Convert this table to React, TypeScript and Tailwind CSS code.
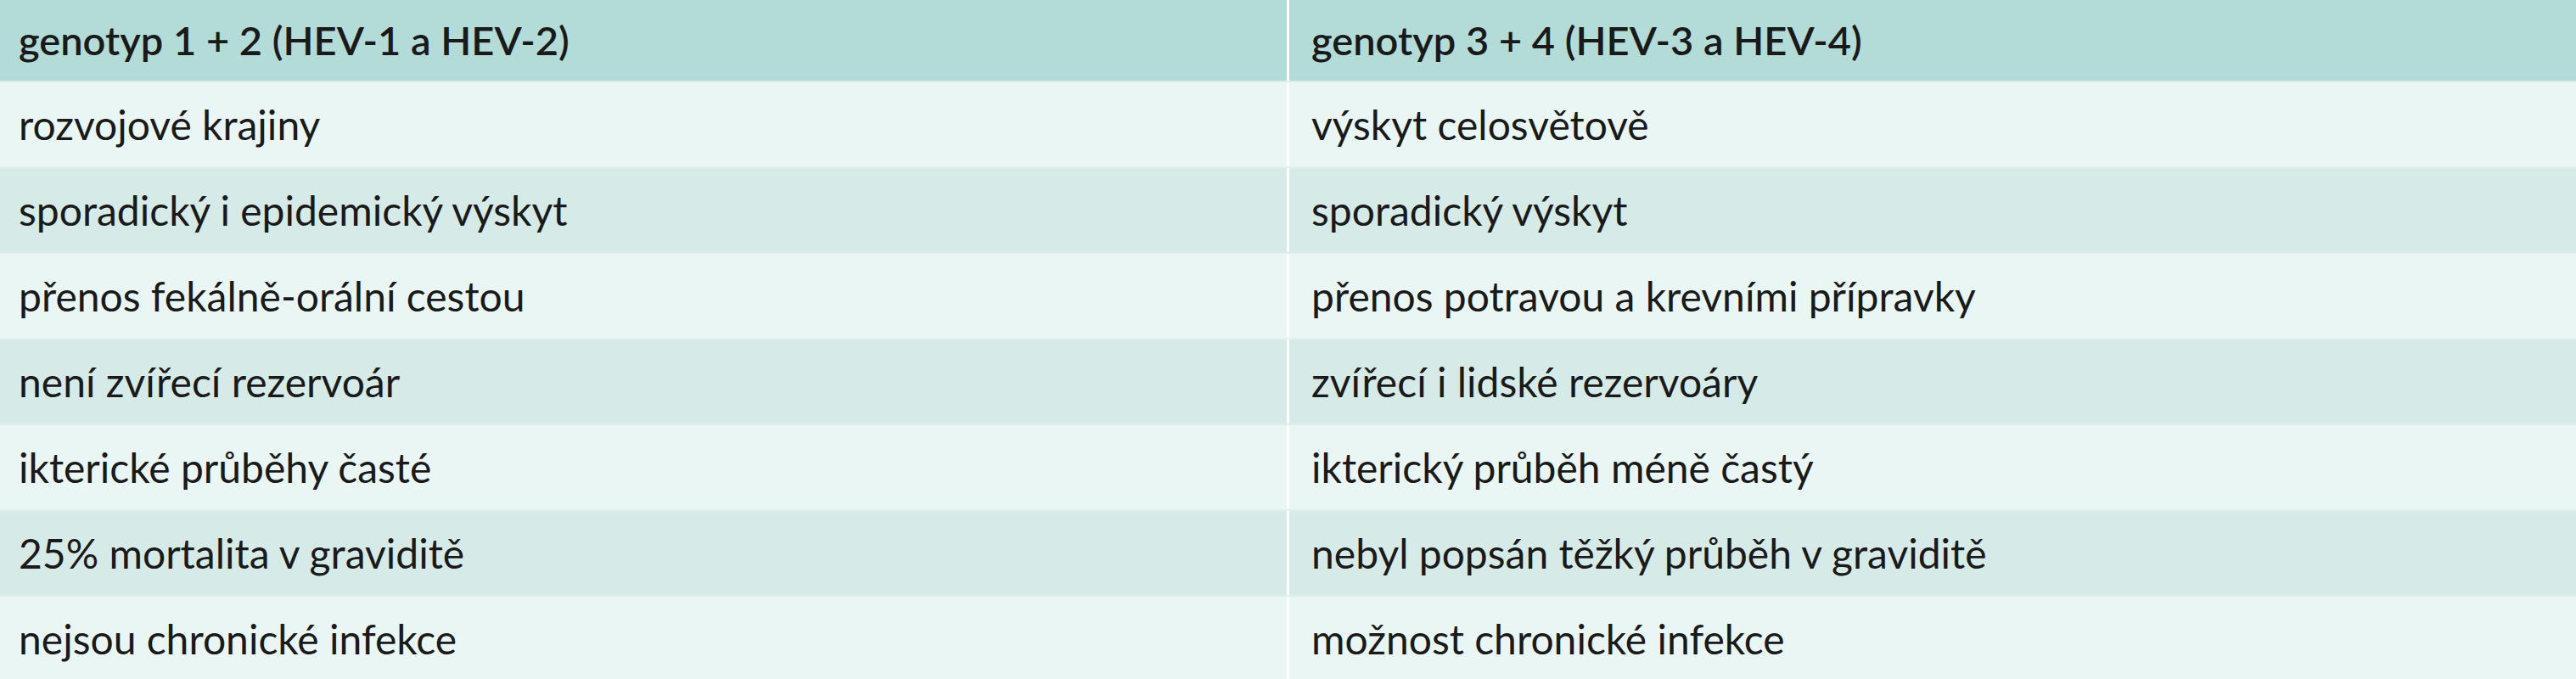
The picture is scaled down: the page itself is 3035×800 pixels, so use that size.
const rows: [string, string][] = [
  ["rozvojové krajiny", "výskyt celosvětově"],
  ["sporadický i epidemický výskyt", "sporadický výskyt"],
  ["přenos fekálně-orální cestou", "přenos potravou a krevními přípravky"],
  ["není zvířecí rezervoár", "zvířecí i lidské rezervoáry"],
  ["ikterické průběhy časté", "ikterický průběh méně častý"],
  ["25% mortalita v graviditě", "nebyl popsán těžký průběh v graviditě"],
  ["nejsou chronické infekce", "možnost chronické infekce"],
];

export default function App() {
  return (
    <div className="h-[800px] w-[3035px] overflow-hidden bg-[#eaf6f3] font-['Lato',sans-serif] text-[48px] leading-none text-[#1a1a1a]">
      <div className="grid h-[95px] grid-cols-[1519px_1fr] bg-[#b3dcd8] text-[47px] font-semibold">
        <div className="flex items-center border-r-[3px] border-white pl-[22px]">genotyp 1 + 2 (HEV-1 a HEV-2)</div>
        <div className="flex items-center pl-[26px]">genotyp 3 + 4 (HEV-3 a HEV-4)</div>
      </div>
      {rows.map(([left, right], i) => (
        <div
          key={left}
          className={
            i % 2 === 0
              ? "grid h-[101px] grid-cols-[1519px_1fr] border-t-2 border-[#dcefec] bg-[#eaf6f3]"
              : "grid h-[101px] grid-cols-[1519px_1fr] border-t-2 border-[#e0f1ee] bg-[#d6eae7]"
          }
        >
          <div className="flex items-center border-r-[3px] border-white pl-[22px]">{left}</div>
          <div className="flex items-center pl-[26px]">{right}</div>
        </div>
      ))}
    </div>
  );
}
